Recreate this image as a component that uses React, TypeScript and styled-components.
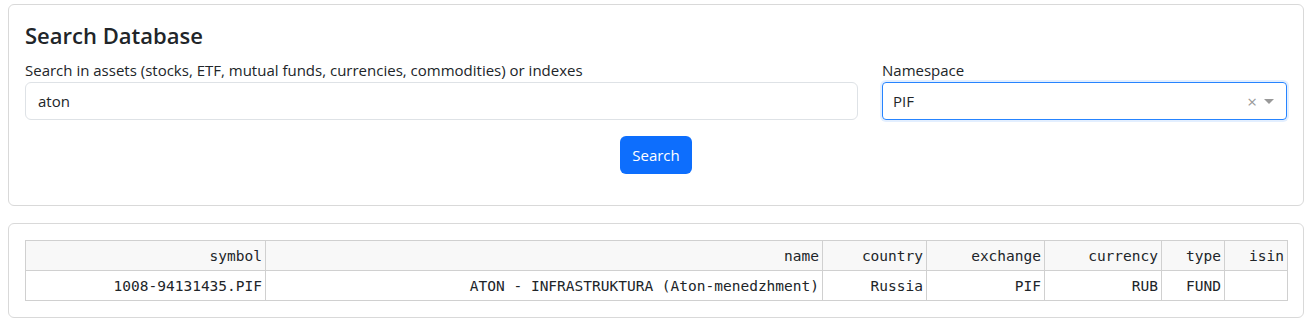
import React from 'react';
import styled, { createGlobalStyle } from 'styled-components';

const GlobalStyle = createGlobalStyle`
  * {
    box-sizing: border-box;
  }

  body {
    margin: 0;
    padding: 4px 8px;
    background: #fff;
    color: #212529;
    font-family: "Open Sans", "Noto Sans", sans-serif;
    font-size: 15px;
  }
`;

const Card = styled.section<{ gapBelow?: boolean }>`
  border: 1px solid #d9d9d9;
  border-radius: 6px;
  padding: 16px;
  margin-bottom: ${props => props.gapBelow ? '17px' : '0'};
  background: #fff;
`;

const Title = styled.h4`
  margin: 0 0 8px;
  font-size: 22px;
  font-weight: 600;
  line-height: 29px;
`;

const FormRow = styled.div`
  display: grid;
  grid-template-columns: 833px 1fr;
  column-gap: 24px;
`;

const Field = styled.div`
  display: flex;
  flex-direction: column;
`;

const Label = styled.label`
  line-height: 24px;
  font-size: 15px;
`;

const TextInput = styled.div`
  height: 38px;
  border: 1px solid #dee2e6;
  border-radius: 6px;
  padding: 0 12px;
  display: flex;
  align-items: center;
  font-size: 15px;
`;

const SelectBox = styled.div`
  height: 38px;
  border: 1px solid #2684ff;
  border-radius: 4px;
  box-shadow: 0 0 0 2px #e3efff;
  padding: 0 10px;
  display: flex;
  align-items: center;
  font-size: 15px;
`;

const SelectValue = styled.span`
  flex: 1;
`;

const Clear = styled.span`
  color: #999;
  font-size: 17px;
  line-height: 1;
  margin-right: 7px;
`;

const Caret = styled.span`
  width: 0;
  height: 0;
  border-left: 5px solid transparent;
  border-right: 5px solid transparent;
  border-top: 5px solid #999;
  margin-right: 2px;
`;

const Actions = styled.div`
  display: flex;
  justify-content: center;
  margin: 16px 0 15px;
`;

const Button = styled.button`
  height: 38px;
  padding: 0 12px;
  border: none;
  border-radius: 6px;
  background: #0d6efd;
  color: #fff;
  font-family: inherit;
  font-size: 15px;
`;

const Table = styled.table`
  width: 100%;
  table-layout: fixed;
  border-collapse: collapse;
  font-family: "DejaVu Sans Mono", monospace;
  font-size: 14.5px;
`;

const Cell = styled.td<{ head?: boolean }>`
  border: 1px solid #d0d0d0;
  height: 30px;
  padding: 0 3px;
  text-align: right;
  white-space: nowrap;
  background: ${props => props.head ? '#f8f8f8' : '#fff'};
  font-weight: normal;
`;

const columns = [
  { key: 'symbol', width: 240 },
  { key: 'name', width: 557 },
  { key: 'country', width: 104 },
  { key: 'exchange', width: 118 },
  { key: 'currency', width: 117 },
  { key: 'type', width: 63 },
  { key: 'isin', width: 63 },
];

const rows: Record<string, string>[] = [
  {
    symbol: '1008-94131435.PIF',
    name: 'ATON - INFRASTRUKTURA (Aton-menedzhment)',
    country: 'Russia',
    exchange: 'PIF',
    currency: 'RUB',
    type: 'FUND',
    isin: '',
  },
];

const App: React.FC = () => {
  return (
    <>
      <GlobalStyle />
      <Card gapBelow>
        <Title>Search Database</Title>
        <FormRow>
          <Field>
            <Label>Search in assets (stocks, ETF, mutual funds, currencies, commodities) or indexes</Label>
            <TextInput>aton</TextInput>
          </Field>
          <Field>
            <Label>Namespace</Label>
            <SelectBox>
              <SelectValue>PIF</SelectValue>
              <Clear>×</Clear>
              <Caret />
            </SelectBox>
          </Field>
        </FormRow>
        <Actions>
          <Button>Search</Button>
        </Actions>
      </Card>

      <Card>
        <Table>
          <colgroup>
            {columns.map(col => (
              <col key={col.key} style={{ width: col.width }} />
            ))}
          </colgroup>
          <thead>
            <tr>
              {columns.map(col => (
                <Cell as="th" head key={col.key}>{col.key}</Cell>
              ))}
            </tr>
          </thead>
          <tbody>
            {rows.map((row, idx) => (
              <tr key={idx}>
                {columns.map(col => (
                  <Cell key={col.key}>{row[col.key]}</Cell>
                ))}
              </tr>
            ))}
          </tbody>
        </Table>
      </Card>
    </>
  );
};

export default App;
